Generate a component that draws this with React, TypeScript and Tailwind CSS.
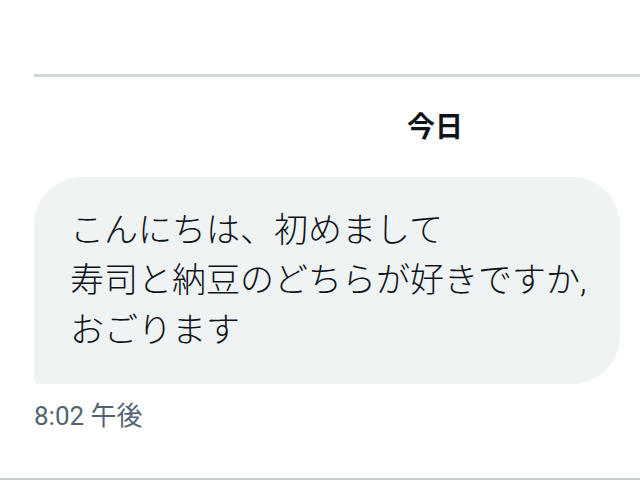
export default function App() {
  return (
    <div
      className="w-[640px] h-[480px] bg-white overflow-hidden flex flex-col"
      style={{ fontFamily: 'Roboto, "Noto Sans CJK JP", sans-serif' }}
    >
      <div className="h-[74px]" />
      <div className="ml-[34px] h-[3px] bg-[#cfd9de]" />
      <div className="h-[35px]" />
      <div className="flex pl-[407px]">
        <span className="text-[28px] leading-[31px] font-bold text-[#0f1419]">今日</span>
      </div>
      <div className="h-[34px]" />
      <div className="ml-[34px] w-[586px] h-[207px] bg-[#eff3f4] rounded-tl-[48px] rounded-tr-[48px] rounded-br-[48px] rounded-bl-[5px] pl-[36px] pt-[28px]">
        <p className="text-[34px] leading-[50px] font-light text-[#0f1419]">
          こんにちは、初めまして
          <br />
          寿司と納豆のどちらが好きですか,
          <br />
          おごります
        </p>
      </div>
      <div className="h-[17px]" />
      <div className="pl-[34px] text-[26px] leading-[30px] text-[#536471]">8:02 午後</div>
      <div className="flex-1" />
      <div className="h-[2px] bg-[#c4cdd1]" />
    </div>
  );
}
